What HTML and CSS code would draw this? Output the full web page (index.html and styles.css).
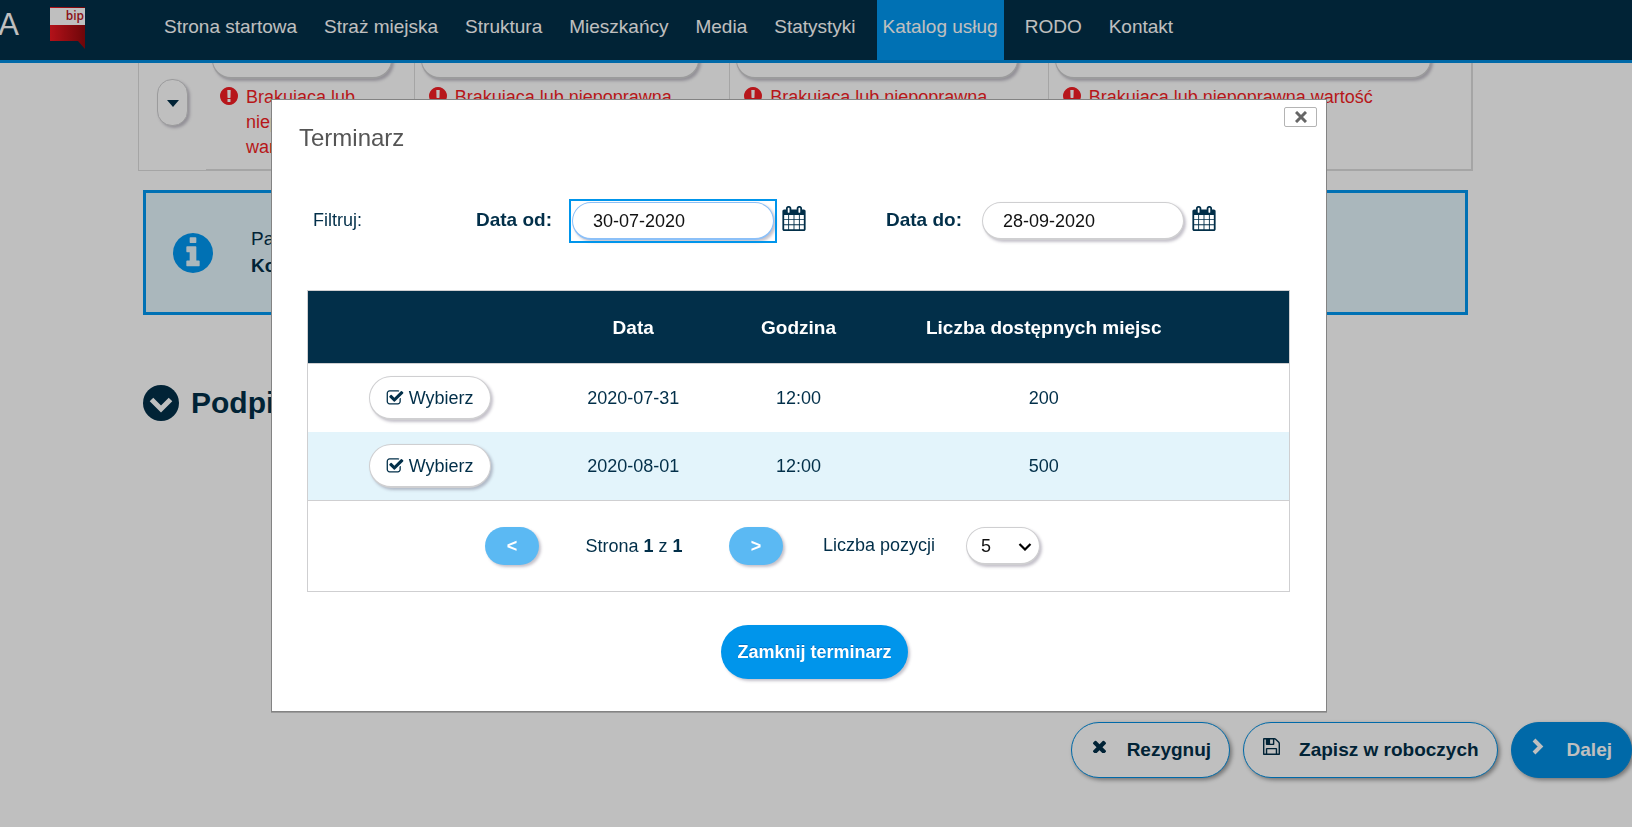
FILE: index.html
```html
<!DOCTYPE html>
<html lang="pl">
<head>
<meta charset="utf-8">
<title>Terminarz</title>
<link rel="stylesheet" href="styles.css">
</head>
<body>
<svg class="sprite" aria-hidden="true">
  <symbol id="i-error" viewBox="128 128 1536 1536"><path d="M896 128q209 0 385.500 103t279.500 279.500 103 385.500-103 385.500-279.500 279.500-385.500 103-385.500-103-279.500-279.500-103-385.500 103-385.500 279.500-279.500 385.500-103zm128 1247v-190q0-14-9-23.500t-22-9.500h-192q-13 0-23 10t-10 23v190q0 13 10 23t23 10h192q13 0 22-9.500t9-23.500zm-2-344l18-621q0-12-10-18-10-8-24-8h-220q-14 0-24 8-10 6-10 18l17 621q0 10 10 17.500t24 7.500h185q14 0 23.500-7.500t10.500-17.500z"/></symbol>
  <symbol id="i-info" viewBox="128 128 1536 1536"><path d="M1152 1376v-160q0-14-9-23t-23-9h-96v-512q0-14-9-23t-23-9h-320q-14 0-23 9t-9 23v160q0 14 9 23t23 9h96v320h-96q-14 0-23 9t-9 23v160q0 14 9 23t23 9h448q14 0 23-9t9-23zm-128-896v-160q0-14-9-23t-23-9h-192q-14 0-23 9t-9 23v160q0 14 9 23t23 9h192q14 0 23-9t9-23zm640 416q0 209-103 385.500t-279.500 279.500-385.500 103-385.500-103-279.500-279.500-103-385.500 103-385.500 279.500-279.500 385.500-103 385.500 103 279.500 279.500 103 385.500z"/></symbol>
  <symbol id="i-check" viewBox="0 0 1792 1792"><path d="M1472 930v318q0 119-84.500 203.500t-203.500 84.500h-832q-119 0-203.500-84.500t-84.500-203.500v-832q0-119 84.500-203.500t203.500-84.500h832q63 0 117 25 15 7 18 23 3 17-9 29l-49 49q-10 10-23 10-3 0-9-2-23-6-45-6h-832q-66 0-113 47t-47 113v832q0 66 47 113t113 47h832q66 0 113-47t47-113v-254q0-13 9-22l64-64q10-10 23-10 6 0 12 3 20 8 20 29zm231-489l-814 814q-24 24-57 24t-57-24l-430-430q-24-24-24-57t24-57l110-110q24-24 57-24t57 24l263 263 647-647q24-24 57-24t57 24l110 110q24 24 24 57t-24 57z"/></symbol>
  <symbol id="i-times" viewBox="302 434 1188 1188"><path transform="translate(0 132)" d="M1490 1322q0 40-28 68l-136 136q-28 28-68 28t-68-28l-294-294-294 294q-28 28-68 28t-68-28l-136-136q-28-28-28-68t28-68l294-294-294-294q-28-28-28-68t28-68l136-136q28-28 68-28t68 28l294 294 294-294q28-28 68-28t68 28l136 136q28 28 28 68t-28 68l-294 294 294 294q28 28 28 68z"/></symbol>
  <symbol id="i-calendar" viewBox="64 0 1664 1792"><path d="M192 1664h288v-288h-288v288zm352 0h320v-288h-320v288zm-352-352h288v-320h-288v320zm352 0h320v-320h-320v320zm-352-384h288v-288h-288v288zm736 736h320v-288h-320v288zm-384-736h320v-288h-320v288zm768 736h288v-288h-288v288zm-384-352h320v-320h-320v320zm-352-864v-288q0-13-9.500-22.500t-22.500-9.500h-64q-13 0-22.500 9.500t-9.500 22.500v288q0 13 9.500 22.500t22.500 9.500h64q13 0 22.500-9.500t9.500-22.500zm736 864h288v-320h-288v320zm-384-384h320v-288h-320v288zm384 0h288v-288h-288v288zm32-480v-288q0-13-9.500-22.500t-22.500-9.500h-64q-13 0-22.500 9.500t-9.500 22.500v288q0 13 9.500 22.500t22.500 9.500h64q13 0 22.500-9.500t9.500-22.500zm384-64v1280q0 52-38 90t-90 38h-1408q-52 0-90-38t-38-90v-1280q0-52 38-90t90-38h128v-96q0-66 47-113t113-47h64q66 0 113 47t47 113v96h384v-96q0-66 47-113t113-47h64q66 0 113 47t47 113v96h128q52 0 90 38t38 90z"/></symbol>
  <symbol id="i-save" viewBox="128 128 1536 1536"><path d="M512 1536h768v-384h-768v384zm896 0h128v-896q0-14-10-38.500t-20-34.500l-281-281q-10-10-34-20t-39-10v416q0 40-28 68t-68 28h-576q-40 0-68-28t-28-68v-416h-128v1280h128v-416q0-40 28-68t68-28h832q40 0 68 28t28 68v416zm-384-928v-320q0-13-9.500-22.500t-22.500-9.500h-192q-13 0-22.500 9.500t-9.500 22.500v320q0 13 9.500 22.500t22.500 9.500h192q13 0 22.500-9.500t9.500-22.500zm640 32v928q0 40-28 68t-68 28h-1344q-40 0-68-28t-28-68v-1344q0-40 28-68t68-28h928q40 0 88 20t76 48l280 280q28 28 48 76t20 88z"/></symbol>
</svg>

<header class="topbar">
  <div class="brand">A</div>
  <svg class="bip" viewBox="0 0 36 42" role="img" aria-label="bip">
    <defs><linearGradient id="bipred"><stop offset="0" stop-color="#f01822"/><stop offset="1" stop-color="#93080d"/></linearGradient></defs>
    <path fill="url(#bipred)" d="M0 0h35v42l-7-8H0z"/>
    <path fill="#fff" d="M0 1h35v17H0z"/>
    <text class="bip-text" x="34" y="13" text-anchor="end">bip</text>
  </svg>
  <nav class="menu">
    <a href="#">Strona startowa</a>
    <a href="#">Straż miejska</a>
    <a href="#">Struktura</a>
    <a href="#">Mieszkańcy</a>
    <a href="#">Media</a>
    <a href="#">Statystyki</a>
    <a href="#" class="active">Katalog usług</a>
    <a href="#">RODO</a>
    <a href="#">Kontakt</a>
  </nav>
</header>

<main class="page">
  <section class="fields">
    <div class="tools"><button class="toggle" type="button" aria-label="Rozwiń"><svg width="12" height="7" viewBox="0 0 12 7"><path d="M0 0h12L6 7z"/></svg></button></div>
    <div class="field"><input class="pill" type="text" aria-label="Pole 1"><p class="error"><svg><use href="#i-error"/></svg><span>Brakująca lub niepoprawna wartość</span></p></div>
    <div class="field"><input class="pill" type="text" aria-label="Pole 2"><p class="error"><svg><use href="#i-error"/></svg><span>Brakująca lub niepoprawna wartość</span></p></div>
    <div class="field"><input class="pill" type="text" aria-label="Pole 3"><p class="error"><svg><use href="#i-error"/></svg><span>Brakująca lub niepoprawna wartość</span></p></div>
    <div class="field"><input class="pill" type="text" aria-label="Pole 4"><p class="error"><svg><use href="#i-error"/></svg><span>Brakująca lub niepoprawna wartość</span></p></div>
  </section>

  <section class="notice">
    <svg><use href="#i-info"/></svg>
    <p>Pani/Pan<br><b>Kowalski</b></p>
  </section>

  <h2 class="section-title">
    <svg viewBox="0 0 36 36"><circle cx="18" cy="18" r="18"/><path d="M8.500 14.500l9.500 9.500 9.500-9.500" fill="none" stroke="#fff" stroke-width="5"/></svg>
    Podpis
  </h2>

  <div class="actions">
    <button class="action" type="button"><svg class="small"><use href="#i-times"/></svg>Rezygnuj</button>
    <button class="action" type="button"><svg><use href="#i-save"/></svg>Zapisz w roboczych</button>
    <button class="action primary" type="button"><svg viewBox="0 0 17 17"><path d="M3 2l6.500 6.500L3 15" fill="none" stroke="currentColor" stroke-width="4"/></svg>Dalej</button>
  </div>
</main>

<div class="overlay">
  <div class="dialog" role="dialog" aria-labelledby="dialog-title">
    <div class="dialog-head">
      <h1 id="dialog-title">Terminarz</h1>
      <button class="close" type="button" aria-label="Zamknij"><svg viewBox="0 0 12 12"><path d="M1 1l10 10M11 1L1 11" stroke="currentColor" stroke-width="3"/></svg></button>
    </div>

    <form class="filter">
      <span class="filter-name">Filtruj:</span>
      <div class="date">
        <label for="from">Data od:</label>
        <span class="focus-box"><input class="pill" id="from" type="text" value="30-07-2020"></span>
        <button type="button" class="cal" aria-label="Kalendarz"><svg><use href="#i-calendar"/></svg></button>
      </div>
      <div class="date">
        <label for="to">Data do:</label>
        <input class="pill" id="to" type="text" value="28-09-2020">
        <button type="button" class="cal" aria-label="Kalendarz"><svg><use href="#i-calendar"/></svg></button>
      </div>
    </form>

    <div class="grid-box">
      <table class="slots">
        <colgroup><col class="c1"><col class="c2"><col class="c3"><col class="c4"><col></colgroup>
        <thead><tr><th></th><th>Data</th><th>Godzina</th><th>Liczba dostępnych miejsc</th><th></th></tr></thead>
        <tbody>
          <tr><td><button class="choose" type="button"><svg><use href="#i-check"/></svg>Wybierz</button></td><td>2020-07-31</td><td>12:00</td><td>200</td><td></td></tr>
          <tr><td><button class="choose" type="button"><svg><use href="#i-check"/></svg>Wybierz</button></td><td>2020-08-01</td><td>12:00</td><td>500</td><td></td></tr>
        </tbody>
      </table>
      <div class="pager">
        <button class="step" type="button">&lt;</button>
        <span class="count">Strona <b>1</b> z <b>1</b></span>
        <button class="step" type="button">&gt;</button>
        <label for="size">Liczba pozycji</label>
        <span class="select">
          <select id="size"><option>5</option></select>
          <svg viewBox="0 0 14 8"><path d="M1.500 1L7 6.500 12.500 1" fill="none" stroke="#000" stroke-width="2.200"/></svg>
        </span>
      </div>
    </div>

    <div class="dialog-foot"><button class="finish" type="button">Zamknij terminarz</button></div>
  </div>
</div>
</body>
</html>
```
FILE: styles.css
```css
:root {
  --navy: #022f49;
  --blue: #0095eb;
  --line: #cfcfd1;
  --shadow: 2px 2px 3px rgba(60, 50, 80, .3);
}
* { box-sizing: border-box; }
body {
  margin: 0;
  min-height: 100vh;
  background: #fff;
  color: var(--navy);
  font: 18px/25px "Liberation Sans", Arial, sans-serif;
  overflow: hidden;
}
button, input, select { font: inherit; color: inherit; margin: 0; }
button { cursor: pointer; }
h1, h2, p { margin: 0; }
svg { fill: currentColor; display: block; flex: none; }
.sprite { display: none; }

.topbar {
  display: flex;
  height: 63px;
  background: var(--navy);
  border-bottom: 3px solid #008de0;
  color: #fff;
}
.brand {
  display: flex;
  justify-content: flex-end;
  width: 19px;
  margin-right: 31px;
  font-size: 31px;
  line-height: 50px;
}
.bip { width: 36px; height: 42px; margin-top: 7px; margin-right: 72px; }
.bip-text { font: 600 12px "Open Sans", sans-serif; fill: #b8141c; }
.menu { display: flex; gap: 15px; font-size: 19px; line-height: 53px; white-space: nowrap; }
.menu a { padding: 0 6px; color: #fff; text-decoration: none; }
.menu .active { background: #0097f1; }

.fields {
  display: grid;
  grid-template-columns: 67px 209fr 316fr 319fr 423fr;
  margin: 0 159px 0 138px;
  height: 108px;
  overflow: hidden;
  border: 1px solid #dcdcdc;
  border-width: 0 2px 1px 1px;
}
.tools { padding: 16px 0 0 18px; }
.toggle {
  display: grid;
  place-items: center;
  width: 31px;
  height: 47px;
  padding: 2px 0 0;
  background: #fff;
  border: 1px solid var(--line);
  border-radius: 15px;
  box-shadow: var(--shadow);
}
.field { padding: 0 30px 0 6px; border-bottom: 1px solid #dcdcdc; border-right: 1px solid #dcdcdc; }
.field:nth-child(2) { padding-right: 22px; }
.field:last-child { padding-right: 40px; border-right: 0; }
.pill {
  width: 100%;
  height: 38px;
  padding: 2px 20px 0;
  background: #fff;
  border: 1px solid var(--line);
  border-bottom-width: 2px;
  border-radius: 19px;
  box-shadow: var(--shadow);
  color: #111;
  outline: 0;
}
.field .pill { display: block; margin-top: -22px; }
.error { display: flex; gap: 8px; padding: 6px 14px 0 8px; color: #f41e25; }
.error svg { width: 18px; height: 18px; margin-top: 2px; }

.notice {
  display: flex;
  align-items: center;
  gap: 38px;
  height: 125px;
  margin: 19px 164px 0 143px;
  padding: 0 27px;
  border: 3px solid #0097f1;
  background: #e3f4fb;
  color: var(--navy);
  font-size: 19px;
  line-height: 27px;
}
.notice svg { width: 40px; height: 40px; color: #0097f1; }
.notice p { padding-bottom: 2px; }

.section-title {
  display: flex;
  align-items: center;
  gap: 12px;
  margin: 70px 0 0 143px;
  font-size: 30px;
  line-height: 36px;
}
.section-title svg { width: 36px; height: 36px; }

.actions { display: flex; justify-content: flex-end; gap: 13px; margin-top: 301px; }
.action {
  display: flex;
  align-items: center;
  gap: 19px;
  height: 56px;
  padding: 0 18px 2px 19px;
  background: #fff;
  border: 1px solid #008de0;
  border-radius: 28px;
  box-shadow: 2px 2px 4px rgba(0, 0, 0, .4);
  font-size: 19px;
  font-weight: bold;
  white-space: nowrap;
}
.action svg { width: 17px; height: 17px; margin-bottom: 6px; }
.action svg.small { padding: 2px; }
.action.primary { padding-right: 19px; background: #008de0; color: #fff; }

.overlay {
  position: fixed;
  inset: 0;
  padding: 99px 305px 0 271px;
  background: rgba(0, 0, 0, .25);
}
.dialog {
  background: #fff;
  border: 1px solid #838383;
  box-shadow: 0 1px 0 #9a9a9a;
  padding: 7px 9px 32px 27px;
}
.dialog-head { display: flex; justify-content: space-between; align-items: flex-start; }
.dialog-head h1 { padding-top: 15px; font-size: 24px; line-height: 32px; font-weight: normal; color: #555; }
.close {
  display: grid;
  place-items: center;
  width: 33px;
  height: 20px;
  padding: 0;
  background: #fff;
  border: 1px solid #b4b4b4;
  border-radius: 2px;
  color: #666;
}
.close svg { width: 12px; height: 12px; }

.filter { display: flex; align-items: center; margin: 48px 0 0 14px; }
.filter-name { width: 163px; padding-bottom: 2px; }
.date { display: flex; align-items: center; margin-right: 79px; }
.date label { width: 96px; padding-bottom: 4px; font-size: 19px; font-weight: bold; white-space: nowrap; }
.date .pill { display: block; width: 202px; }
.focus-box { outline: 2px solid var(--blue); outline-offset: 1px; }
.focus-box .pill { border-color: #8cc0f8; }
.cal { padding: 0 0 6px; margin-left: 8px; border: 0; background: none; color: var(--navy); }
.cal svg { width: 24px; height: 25px; }
.date + .date { margin-left: 1px; }

.grid-box { margin: 50px 27px 0 8px; border: 1px solid var(--line); }
.slots { width: 100%; border-spacing: 0; table-layout: fixed; text-align: center; }
.slots .c1 { width: 24.8%; }
.slots .c2 { width: 16.7%; }
.slots .c3 { width: 17%; }
.slots .c4 { width: 33%; }
.slots th { height: 73px; padding: 0; background: var(--navy); color: #fff; font-size: 19px; border-bottom: 1px solid var(--line); }
.slots td { height: 68px; padding: 0; }
.slots tbody tr:nth-child(2) { background: #e3f4fb; }
.choose {
  display: inline-flex;
  align-items: center;
  justify-content: center;
  gap: 5px;
  width: 122px;
  height: 44px;
  padding: 2px 0 0;
  background: #fff;
  border: 1px solid var(--line);
  border-bottom-width: 2px;
  border-radius: 22px;
  box-shadow: var(--shadow);
  vertical-align: middle;
}
.choose svg { width: 18px; height: 18px; margin-bottom: 2px; }

.pager { display: flex; align-items: center; padding: 26px 0 26px 177px; border-top: 1px solid var(--line); white-space: nowrap; }
.step {
  width: 54px;
  height: 38px;
  padding: 0;
  background: #5bb9f3;
  border: 0;
  border-radius: 19px;
  box-shadow: var(--shadow);
  color: #fff;
  font-weight: bold;
}
.count { width: 190px; text-align: center; }
.pager label { margin: 0 31px 2px 40px; }
.select { position: relative; }
.select select {
  display: block;
  width: 74px;
  height: 38px;
  padding: 1px 14px 0;
  appearance: none;
  background: #fff;
  border: 1px solid var(--line);
  border-bottom-width: 2px;
  border-radius: 19px;
  box-shadow: var(--shadow);
  color: #111;
}
.select svg { position: absolute; right: 8px; top: 16px; width: 14px; height: 8px; pointer-events: none; }

.dialog-foot { display: flex; justify-content: center; margin-top: 33px; padding-left: 13px; }
.finish {
  height: 54px;
  padding: 0 16px;
  background: var(--blue);
  border: 0;
  border-radius: 27px;
  box-shadow: var(--shadow);
  color: #fff;
  font-weight: bold;
  text-shadow: 0 -1px 0 rgba(0, 60, 140, .4);
}
```
